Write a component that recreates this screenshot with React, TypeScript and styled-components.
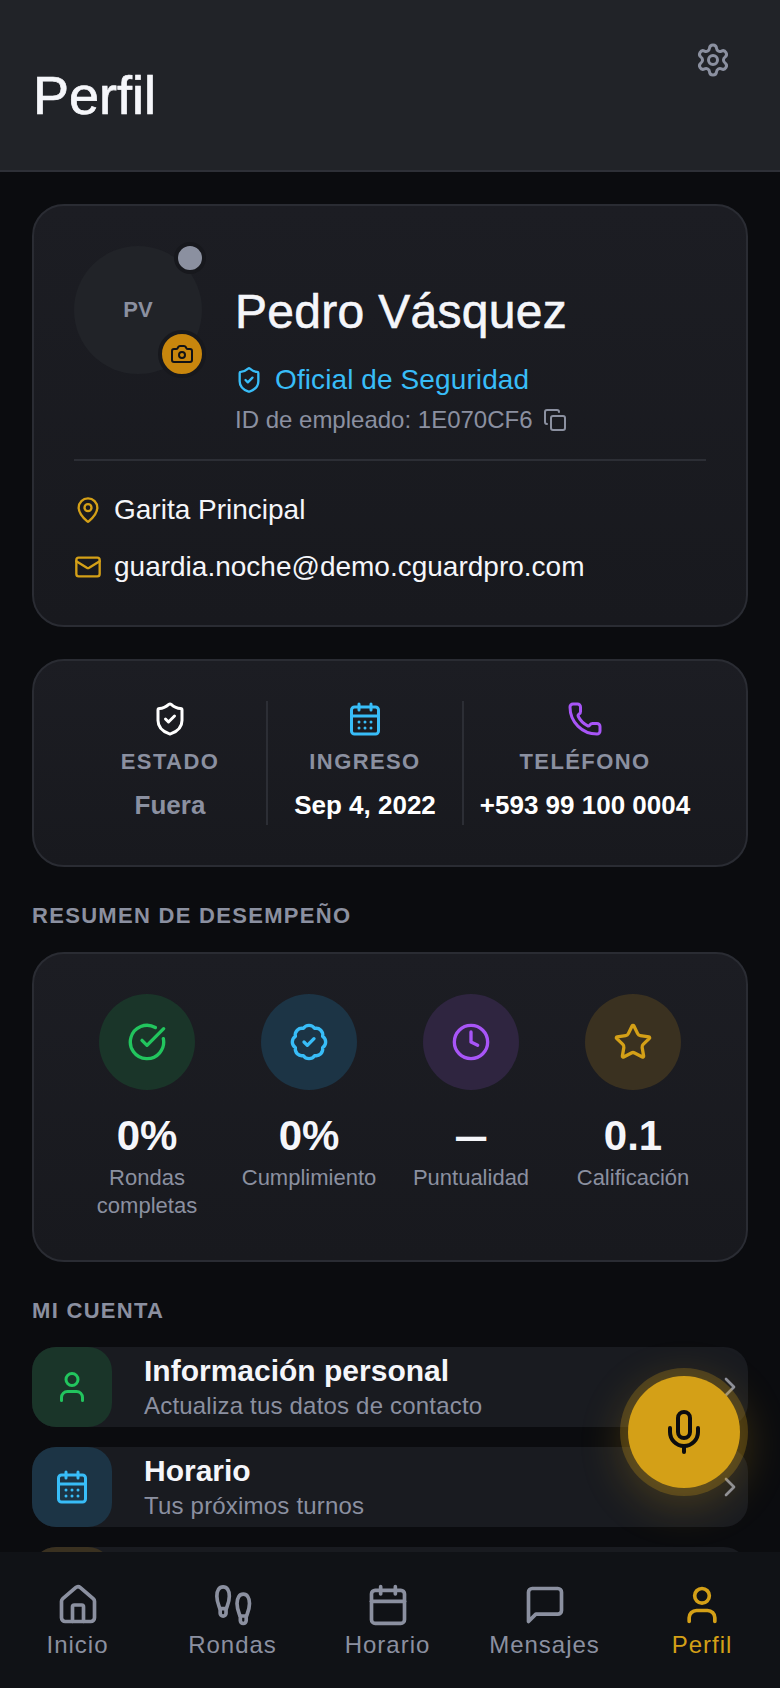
import React from 'react';
import styled, { createGlobalStyle } from 'styled-components';
import {
  BadgeCheck,
  Calendar,
  CalendarDays,
  Camera,
  ChevronRight,
  CircleCheckBig,
  Clock,
  Copy,
  House,
  Mail,
  MapPin,
  Mic,
  Phone,
  Settings,
  ShieldCheck,
  Star,
  User,
} from 'lucide-react';

const muted = '#8b90a0';
const gold = '#d4a017';
const sky = '#38bdf8';
const green = '#22c55e';
const purple = '#a855f7';

const GlobalStyle = createGlobalStyle`
  html, body {
    margin: 0;
    padding: 0;
    background: #0b0c0f;
  }

  * {
    box-sizing: border-box;
  }
`;

const Screen = styled.div`
  position: relative;
  display: flex;
  flex-direction: column;
  width: 780px;
  height: 1688px;
  overflow: hidden;
  background: #0b0c0f;
  color: #f5f6fa;
  font-family: 'Liberation Sans', Arial, sans-serif;
`;

const Header = styled.header`
  display: flex;
  flex-shrink: 0;
  justify-content: space-between;
  height: 172px;
  padding: 64px 49px 0 33px;
  background: #212328;
  border-bottom: 2px solid #2e3037;
`;

const PageTitle = styled.h1`
  margin: 0;
  font-size: 54px;
  line-height: 62px;
  font-weight: 400;
  -webkit-text-stroke: 0.7px #f5f6fa;
`;

const GearButton = styled.div`
  display: flex;
  margin-top: -22px;
  color: ${muted};
  height: 36px;
`;

const Content = styled.main`
  flex: 1;
  min-height: 0;
  overflow: hidden;
  padding: 32px 32px 0;
`;

const Card = styled.section`
  padding: 40px;
  background: linear-gradient(180deg, #1c1d23 0%, #18191e 100%);
  border: 2px solid #2a2c33;
  border-radius: 32px;
`;

const ProfileRow = styled.div`
  display: flex;
  gap: 33px;
`;

const Avatar = styled.div`
  position: relative;
  display: flex;
  flex-shrink: 0;
  align-items: center;
  justify-content: center;
  width: 128px;
  height: 128px;
  background: #212328;
  border-radius: 50%;
  color: ${muted};
  font-size: 22px;
  font-weight: 700;
`;

const StatusDot = styled.span`
  position: absolute;
  top: -4px;
  right: -4px;
  width: 32px;
  height: 32px;
  background: ${muted};
  border: 4px solid #17181d;
  border-radius: 50%;
`;

const CameraBadge = styled.span`
  position: absolute;
  right: -4px;
  bottom: -4px;
  display: flex;
  align-items: center;
  justify-content: center;
  width: 48px;
  height: 48px;
  background: #c8860d;
  border: 4px solid #17181d;
  border-radius: 50%;
  color: #111216;
`;

const ProfileInfo = styled.div`
  padding-top: 38px;
`;

const Name = styled.h2`
  margin: 0;
  font-size: 48px;
  line-height: 56px;
  font-weight: 400;
  letter-spacing: 0.3px;
  -webkit-text-stroke: 0.6px #f5f6fa;
`;

const Role = styled.div`
  display: flex;
  align-items: center;
  gap: 12px;
  margin-top: 24px;
  color: ${sky};
  font-size: 28px;
  line-height: 32px;
  letter-spacing: 0.1px;
`;

const EmployeeId = styled.div`
  display: flex;
  align-items: center;
  gap: 10px;
  margin-top: 9px;
  color: ${muted};
  font-size: 24px;
  line-height: 30px;
`;

const Divider = styled.div`
  height: 2px;
  margin: 24px 0 31px;
  background: #2c2e35;
`;

const ContactRow = styled.div`
  display: flex;
  align-items: center;
  gap: 12px;
  height: 36px;
  font-size: 28px;
  color: #f5f6fa;

  & + & {
    margin-top: 21px;
  }

  svg {
    color: ${gold};
    flex-shrink: 0;
  }
`;

const StatsCard = styled(Card)`
  display: grid;
  grid-template-columns: 194px 196px 1fr;
  margin-top: 32px;
`;

const StatCell = styled.div<{ $last?: boolean }>`
  display: flex;
  flex-direction: column;
  align-items: center;
  height: 124px;
  border-right: ${(p) => (p.$last ? 'none' : '2px solid #2c2e35')};
`;

const IconSlot = styled.span<{ $color: string }>`
  display: flex;
  color: ${(p) => p.$color};
`;

const StatLabel = styled.div`
  margin-top: 12px;
  color: ${muted};
  font-size: 22px;
  line-height: 26px;
  font-weight: 700;
  letter-spacing: 1.4px;
`;

const StatValue = styled.div<{ $dim?: boolean }>`
  margin-top: 14px;
  color: ${(p) => (p.$dim ? muted : '#ffffff')};
  font-size: 26px;
  line-height: 32px;
  font-weight: 700;
  white-space: nowrap;
`;

const SectionTitle = styled.h3`
  margin: 36px 0 23px;
  color: ${muted};
  font-size: 22px;
  line-height: 26px;
  font-weight: 700;
  letter-spacing: 1.3px;
`;

const PerformanceCard = styled(Card)`
  display: grid;
  grid-template-columns: repeat(4, 1fr);
  padding: 40px 32px;
`;

const Metric = styled.div`
  display: flex;
  flex-direction: column;
  align-items: center;
  text-align: center;
`;

const MetricCircle = styled.div<{ $color: string; $tint: string }>`
  display: flex;
  align-items: center;
  justify-content: center;
  width: 96px;
  height: 96px;
  background: ${(p) => p.$tint};
  border-radius: 50%;
  color: ${(p) => p.$color};
`;

const MetricValue = styled.div`
  margin-top: 22px;
  font-size: 42px;
  line-height: 48px;
  font-weight: 700;
`;

const MetricDash = styled.span`
  display: inline-block;
  transform: scaleX(0.72);
`;

const MetricLabel = styled.div`
  margin-top: 4px;
  color: ${muted};
  font-size: 22px;
  line-height: 28px;
`;

const MenuList = styled.div`
  display: flex;
  flex-direction: column;
  gap: 20px;
`;

const MenuRow = styled.div`
  display: flex;
  align-items: center;
  height: 80px;
  padding-right: 2px;
  background: #191b20;
  border-radius: 24px;
`;

const MenuIcon = styled.div<{ $color: string; $tint: string }>`
  display: flex;
  flex-shrink: 0;
  align-items: center;
  justify-content: center;
  width: 80px;
  height: 80px;
  background: ${(p) => p.$tint};
  border-radius: 24px;
  color: ${(p) => p.$color};
`;

const MenuText = styled.div`
  flex: 1;
  margin-left: 32px;
`;

const MenuTitle = styled.div`
  font-size: 30px;
  line-height: 36px;
  font-weight: 700;
`;

const MenuSubtitle = styled.div`
  margin-top: 2px;
  color: ${muted};
  font-size: 24px;
  line-height: 30px;
  letter-spacing: 0.2px;
`;

const Chevron = styled.span`
  display: flex;
  color: ${muted};
`;

const MicFab = styled.button`
  position: absolute;
  top: 1376px;
  right: 40px;
  display: flex;
  align-items: center;
  justify-content: center;
  width: 112px;
  height: 112px;
  padding: 0;
  background: ${gold};
  border: none;
  border-radius: 50%;
  box-shadow: 0 0 0 8px rgba(212, 160, 23, 0.25), 0 12px 44px 6px rgba(212, 160, 23, 0.24);
  color: #0b0c0f;
`;

const BottomNav = styled.nav`
  display: grid;
  flex-shrink: 0;
  grid-template-columns: 155px 155px 155px 159px 156px;
  height: 136px;
  padding-top: 31px;
  background: #101216;
`;

const NavItem = styled.div<{ $active?: boolean }>`
  display: flex;
  flex-direction: column;
  align-items: center;
  gap: 3px;
  color: ${(p) => (p.$active ? gold : muted)};
  font-size: 24px;
  line-height: 30px;
  letter-spacing: 1px;
`;

type IconProps = { size?: number };

const outline = {
  fill: 'none',
  stroke: 'currentColor',
  strokeWidth: 2,
  strokeLinecap: 'round' as const,
  strokeLinejoin: 'round' as const,
};

// the two plain soles of the Rondas tab, not the same as lucide's footprints
const Soles = ({ size = 24 }: IconProps) => (
  <svg width={size} height={size} viewBox="0 0 24 24" {...outline}>
    <path d="M5 14.5C4.4 12.5 3.2 10.5 3.2 7.2 3.2 4 4.5 2.1 6.6 2.1S10 4 10 7.2c0 3.3-1.2 5.3-1.8 7.3v2a1.6 1.6 0 0 1-3.2 0Z" />
    <path d="M5 14h3.2" />
    <path d="M16 18.5c-.6-2-1.8-4-1.8-7.3 0-3.2 1.3-5.1 3.4-5.1s3.4 1.9 3.4 5.1c0 3.3-1.2 5.3-1.8 7.3v2a1.6 1.6 0 0 1-3.2 0Z" />
    <path d="M16 18h3.2" />
  </svg>
);

const Bubble = ({ size = 24 }: IconProps) => (
  <svg width={size} height={size} viewBox="0 0 24 24" {...outline}>
    <path d="M21 15a2 2 0 0 1-2 2H7l-4 4V5a2 2 0 0 1 2-2h14a2 2 0 0 1 2 2z" />
  </svg>
);

const stats = [
  { icon: ShieldCheck, color: '#ffffff', label: 'ESTADO', value: 'Fuera', dim: true },
  { icon: CalendarDays, color: sky, label: 'INGRESO', value: 'Sep 4, 2022' },
  { icon: Phone, color: purple, label: 'TELÉFONO', value: '+593 99 100 0004' },
];

const metrics = [
  { icon: CircleCheckBig, color: green, tint: '#1a3529', value: '0%', label: 'Rondas completas' },
  { icon: BadgeCheck, color: sky, tint: '#1c3445', value: '0%', label: 'Cumplimiento' },
  { icon: Clock, color: purple, tint: '#2f2540', value: null, label: 'Puntualidad' },
  { icon: Star, color: gold, tint: '#3a3120', value: '0.1', label: 'Calificación' },
];

const menu = [
  { icon: User, color: green, tint: '#1a3529', title: 'Información personal', subtitle: 'Actualiza tus datos de contacto' },
  { icon: CalendarDays, color: sky, tint: '#1c3445', title: 'Horario', subtitle: 'Tus próximos turnos' },
  // third row only peeks out above the tab bar, nothing of its text is visible
  { icon: null, color: gold, tint: '#3a3120', title: '', subtitle: '' },
];

const tabs = [
  { icon: House, label: 'Inicio' },
  { icon: Soles, label: 'Rondas' },
  { icon: Calendar, label: 'Horario' },
  { icon: Bubble, label: 'Mensajes' },
  { icon: User, label: 'Perfil', active: true },
];

const App = () => (
  <Screen>
    <GlobalStyle />
    <Header>
      <PageTitle>Perfil</PageTitle>
      <GearButton>
        <Settings size={36} />
      </GearButton>
    </Header>

    <Content>
      <Card>
        <ProfileRow>
          <Avatar>
            PV
            <StatusDot />
            <CameraBadge>
              <Camera size={24} />
            </CameraBadge>
          </Avatar>
          <ProfileInfo>
            <Name>Pedro Vásquez</Name>
            <Role>
              <ShieldCheck size={28} />
              Oficial de Seguridad
            </Role>
            <EmployeeId>
              ID de empleado: 1E070CF6
              <Copy size={24} />
            </EmployeeId>
          </ProfileInfo>
        </ProfileRow>
        <Divider />
        <ContactRow>
          <MapPin size={28} />
          Garita Principal
        </ContactRow>
        <ContactRow>
          <Mail size={28} />
          guardia.noche@demo.cguardpro.com
        </ContactRow>
      </Card>

      <StatsCard>
        {stats.map((s, i) => (
          <StatCell key={s.label} $last={i === stats.length - 1}>
            <IconSlot $color={s.color}>
              <s.icon size={36} />
            </IconSlot>
            <StatLabel>{s.label}</StatLabel>
            <StatValue $dim={s.dim}>{s.value}</StatValue>
          </StatCell>
        ))}
      </StatsCard>

      <SectionTitle>RESUMEN DE DESEMPEÑO</SectionTitle>
      <PerformanceCard>
        {metrics.map((m) => (
          <Metric key={m.label}>
            <MetricCircle $color={m.color} $tint={m.tint}>
              <m.icon size={40} />
            </MetricCircle>
            <MetricValue>{m.value ?? <MetricDash>—</MetricDash>}</MetricValue>
            <MetricLabel>{m.label}</MetricLabel>
          </Metric>
        ))}
      </PerformanceCard>

      <SectionTitle>MI CUENTA</SectionTitle>
      <MenuList>
        {menu.map((item, i) => (
          <MenuRow key={i}>
            <MenuIcon $color={item.color} $tint={item.tint}>
              {item.icon && <item.icon size={36} />}
            </MenuIcon>
            {item.title && (
              <>
                <MenuText>
                  <MenuTitle>{item.title}</MenuTitle>
                  <MenuSubtitle>{item.subtitle}</MenuSubtitle>
                </MenuText>
                <Chevron>
                  <ChevronRight size={32} />
                </Chevron>
              </>
            )}
          </MenuRow>
        ))}
      </MenuList>
    </Content>

    <MicFab>
      <Mic size={48} />
    </MicFab>

    <BottomNav>
      {tabs.map((t) => (
        <NavItem key={t.label} $active={t.active}>
          <t.icon size={44} />
          {t.label}
        </NavItem>
      ))}
    </BottomNav>
  </Screen>
);

export default App;
